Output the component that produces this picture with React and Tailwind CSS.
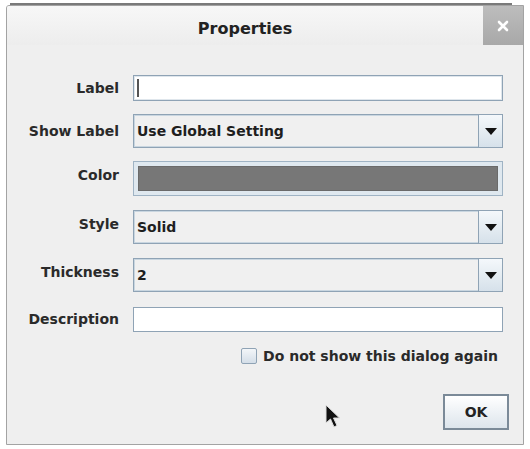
import React from "react";

const font = { fontFamily: '"DejaVu Sans", "Liberation Sans", sans-serif' };

const Arrow = () => (
  <div className="w-[24px] self-stretch border-l border-[#8fa3b5] bg-gradient-to-b from-[#f4f8fb] to-[#d6e1ea] flex items-center justify-center">
    <svg width="12" height="7" viewBox="0 0 12 7">
      <path d="M0 0 L12 0 L6 7 Z" fill="#111" />
    </svg>
  </div>
);

const Row = ({ label, children, h, lift }) => (
  <div className={`flex items-center ${h}`}>
    <div className={`w-[112px] text-right text-[14px] font-bold text-[#2a2a2a] ${lift ? "pb-[6px]" : ""}`}>{label}</div>
    <div className="ml-[14px] w-[370px] h-full">{children}</div>
  </div>
);

const Combo = ({ value }) => (
  <div className="h-full flex border border-[#8fa3b5] shadow-[inset_0_0_0_1px_#c9d6e0] bg-[#f0f0f0]">
    <div className="flex-1 flex items-center pl-[3px] text-[14px] font-bold text-[#1e1e1e]">{value}</div>
    <Arrow />
  </div>
);

export default function App() {
  return (
    <div className="w-[530px] h-[449px] bg-white relative" style={font}>
      <div className="absolute left-[10px] top-[3px] w-[502px] h-[2px] bg-[#7a7a7a]" />
      <div className="absolute left-[6px] top-[5px] w-[518px] h-[440px] flex flex-col border border-[#a3a3a3] bg-[#efefef] rounded-tl-[3px] overflow-hidden">
        {/* title bar */}
        <div className="h-[39px] flex bg-gradient-to-b from-[#f7f7f7] to-[#ededed]">
          <div className="flex-1 flex items-center justify-center pt-[6px] text-[16px] font-bold text-[#222]">Properties</div>
          <div className="w-[40px] flex items-center justify-center bg-gradient-to-b from-[#bdbdbd] to-[#a8a8a8]">
            <svg width="12" height="12" viewBox="0 0 12 12">
              <path d="M2 2 L10 10 M10 2 L2 10" stroke="#fff" strokeWidth="2.6" strokeLinecap="round" />
            </svg>
          </div>
        </div>

        <div className="flex flex-col pt-[30px]">
          <Row label="Label" h="h-[26px]">
            <div className="h-full bg-white border border-[#8fa3b5] shadow-[inset_0_0_0_1px_#dfe6ec] flex items-center pl-[3px]">
              <div className="w-[2px] h-[18px] bg-[#555]" />
            </div>
          </Row>
          <div className="h-[13px]" />
          <Row label="Show Label" h="h-[34px]">
            <Combo value="Use Global Setting" />
          </Row>
          <div className="h-[13px]" />
          <Row label="Color" h="h-[35px]" lift>
            <div className="h-full border border-[#9fb3c4] bg-[#dfe8ef] p-[4px]">
              <div className="h-full bg-[#777777] border border-[#6a6a6a]" />
            </div>
          </Row>
          <div className="h-[14px]" />
          <Row label="Style" h="h-[34px]" lift>
            <Combo value="Solid" />
          </Row>
          <div className="h-[14px]" />
          <Row label="Thickness" h="h-[34px]" lift>
            <Combo value="2" />
          </Row>
          <div className="h-[15px]" />
          <Row label="Description" h="h-[25px]">
            <div className="h-full bg-white border border-[#8fa3b5]" />
          </Row>

          <div className="flex items-center justify-end pr-[25px] mt-[15px] h-[18px]">
            <div className="w-[16px] h-[16px] border border-[#8fa3b5] bg-gradient-to-b from-[#f3f6f9] to-[#d4dee8] rounded-[2px]" />
            <span className="ml-[6px] text-[14px] font-bold text-[#2a2a2a]">Do not show this dialog again</span>
          </div>

          <div className="flex justify-end pr-[14px] mt-[29px]">
            <div className="w-[66px] h-[36px] border-2 border-[#7b8a98] bg-gradient-to-b from-[#ffffff] to-[#dde5ec] flex items-center justify-center text-[14px] font-bold text-[#222]">
              OK
            </div>
          </div>
        </div>

        {/* mouse pointer */}
        <svg className="absolute left-[318px] top-[398px]" width="16" height="24" viewBox="0 0 16 24">
          <path d="M1 1 L1 19 L5.5 15 L9 23 L12 21.5 L8.5 14 L14.5 14 Z" fill="#111" stroke="#ddd" strokeWidth="1" />
        </svg>
      </div>
    </div>
  );
}
